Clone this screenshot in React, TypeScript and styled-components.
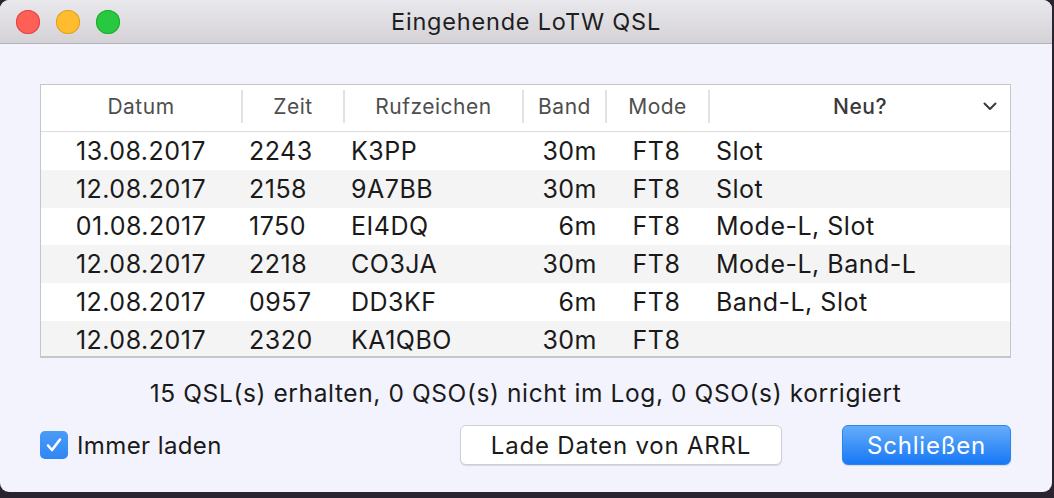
import React from "react";
import styled, { createGlobalStyle } from "styled-components";

const GlobalStyle = createGlobalStyle`
  html, body {
    margin: 0;
    padding: 0;
    background: #2a2430;
  }
  body {
    font-family: "Inter", "Noto Sans", sans-serif;
    -webkit-font-smoothing: antialiased;
  }
`;

// Window frame
const Window = styled.div`
  width: 1052px;
  height: 492px;
  background: #f3f3fd;
  border-radius: 9px;
  overflow: hidden;
  display: flex;
  flex-direction: column;
`;

const TitleBar = styled.div`
  height: 43px;
  flex: none;
  display: flex;
  align-items: center;
  position: relative;
  background: linear-gradient(#e9e8ed, #d4d2d7);
  border-bottom: 1px solid #b3b2b6;
`;

const Lights = styled.div`
  display: flex;
  gap: 16px;
  padding-left: 16px;
`;

const Light = styled.span<{ $fill: string; $edge: string }>`
  width: 24px;
  height: 24px;
  border-radius: 50%;
  background: ${(p) => p.$fill};
  box-shadow: inset 0 0 0 1px ${(p) => p.$edge};
`;

const Title = styled.div`
  position: absolute;
  left: 0;
  right: 0;
  text-align: center;
  font-size: 23.5px;
  letter-spacing: 0.8px;
  color: #1e1e1e;
`;

const Content = styled.div`
  flex: 1;
  display: flex;
  flex-direction: column;
  padding: 40px 41px 0 40px;
`;

// Table
const COLS = "200px 102px 179px 83px 103px 1fr";

const Table = styled.div`
  height: 274px;
  background: #ffffff;
  border: 1px solid #c6c6c6;
  border-bottom-width: 2px;
  box-sizing: border-box;
  overflow: hidden;
`;

const HeaderRow = styled.div`
  display: grid;
  grid-template-columns: ${COLS};
  height: 47px;
  border-bottom: 1px solid #dcdcdc;
  box-sizing: border-box;
`;

const HeaderCell = styled.div<{ $sep?: boolean; $sorted?: boolean }>`
  display: flex;
  align-items: center;
  justify-content: center;
  position: relative;
  font-size: 21px;
  letter-spacing: 0.5px;
  color: ${(p) => (p.$sorted ? "#3a3a3a" : "#4e4e4e")};
  font-weight: ${(p) => (p.$sorted ? 500 : 400)};
  border-left: ${(p) => (p.$sep ? "2px solid #e2e2e2" : "none")};
  margin: 5px 0 8px;
`;

const Chevron = styled.svg`
  position: absolute;
  right: 13px;
  top: 50%;
  margin-top: -5px;
`;

const Row = styled.div<{ $alt: boolean }>`
  display: grid;
  grid-template-columns: ${COLS};
  height: 37.8px;
  align-items: center;
  background: ${(p) => (p.$alt ? "#f4f4f4" : "#ffffff")};
  font-size: 25px;
  letter-spacing: 0.5px;
  color: #1a1a1a;
`;

const Cell = styled.div<{ $align: "left" | "center" | "right" }>`
  text-align: ${(p) => p.$align};
  padding: 0 8px;
  white-space: nowrap;
`;

const Status = styled.div`
  margin-top: 20px;
  text-align: center;
  font-size: 24.5px;
  letter-spacing: 0.6px;
  color: #1a1a1a;
`;

const Footer = styled.div`
  display: flex;
  align-items: center;
  margin-top: 17px;
`;

const CheckLabel = styled.label`
  display: flex;
  align-items: center;
  gap: 9px;
  font-size: 24px;
  letter-spacing: 0.4px;
  color: #1a1a1a;
`;

const CheckBox = styled.span`
  width: 28px;
  height: 28px;
  border-radius: 5px;
  background: linear-gradient(#4a9cf8, #2f86f3);
  display: flex;
  align-items: center;
  justify-content: center;
`;

const Button = styled.button<{ $primary?: boolean }>`
  height: 40px;
  border-radius: 6px;
  font-family: inherit;
  font-size: 24px;
  letter-spacing: 0.8px;
  padding: 0;
  color: ${(p) => (p.$primary ? "#ffffff" : "#1a1a1a")};
  background: ${(p) => (p.$primary ? "linear-gradient(#66adfa, #1778f6)" : "#ffffff")};
  border: 1px solid ${(p) => (p.$primary ? "#2a84f0" : "#cfcfd2")};
  box-shadow: 0 1px 1px rgba(0, 0, 0, 0.12);
`;

const LoadButton = styled(Button)`
  width: 322px;
  margin-left: auto;
`;

const CloseButton = styled(Button)`
  width: 169px;
  margin-left: 60px;
`;

type Qsl = { datum: string; zeit: string; call: string; band: string; mode: string; neu: string };

const rows: Qsl[] = [
  { datum: "13.08.2017", zeit: "2243", call: "K3PP", band: "30m", mode: "FT8", neu: "Slot" },
  { datum: "12.08.2017", zeit: "2158", call: "9A7BB", band: "30m", mode: "FT8", neu: "Slot" },
  { datum: "01.08.2017", zeit: "1750", call: "EI4DQ", band: "6m", mode: "FT8", neu: "Mode-L, Slot" },
  { datum: "12.08.2017", zeit: "2218", call: "CO3JA", band: "30m", mode: "FT8", neu: "Mode-L, Band-L" },
  { datum: "12.08.2017", zeit: "0957", call: "DD3KF", band: "6m", mode: "FT8", neu: "Band-L, Slot" },
  { datum: "12.08.2017", zeit: "2320", call: "KA1QBO", band: "30m", mode: "FT8", neu: "" },
];

const App = () => {
  return (
    <>
      <GlobalStyle />
      <Window>
        <TitleBar>
          <Lights>
            <Light $fill="#fe5f57" $edge="#e2463f" />
            <Light $fill="#febc2e" $edge="#dea123" />
            <Light $fill="#28c840" $edge="#1dad2b" />
          </Lights>
          <Title>Eingehende LoTW QSL</Title>
        </TitleBar>
        <Content>
          <Table>
            <HeaderRow>
              <HeaderCell>Datum</HeaderCell>
              <HeaderCell $sep>Zeit</HeaderCell>
              <HeaderCell $sep>Rufzeichen</HeaderCell>
              <HeaderCell $sep>Band</HeaderCell>
              <HeaderCell $sep>Mode</HeaderCell>
              <HeaderCell $sep $sorted>
                Neu?
                <Chevron width="14" height="9" viewBox="0 0 14 9">
                  <path d="M1.5 1.5 L7 7 L12.5 1.5" fill="none" stroke="#3a3a3a" strokeWidth="2" strokeLinecap="round" strokeLinejoin="round" />
                </Chevron>
              </HeaderCell>
            </HeaderRow>
            {rows.map((r, i) => (
              <Row key={i} $alt={i % 2 === 1}>
                <Cell $align="center">{r.datum}</Cell>
                <Cell $align="left">{r.zeit}</Cell>
                <Cell $align="left">{r.call}</Cell>
                <Cell $align="right">{r.band}</Cell>
                <Cell $align="center">{r.mode}</Cell>
                <Cell $align="left">{r.neu}</Cell>
              </Row>
            ))}
          </Table>
          <Status>15 QSL(s) erhalten, 0 QSO(s) nicht im Log, 0 QSO(s) korrigiert</Status>
          <Footer>
            <CheckLabel>
              <CheckBox>
                <svg width="18" height="16" viewBox="0 0 18 16">
                  <path d="M3 8.5 L7 13 L15 2.5" fill="none" stroke="#ffffff" strokeWidth="2.6" strokeLinecap="round" strokeLinejoin="round" />
                </svg>
              </CheckBox>
              Immer laden
            </CheckLabel>
            <LoadButton>Lade Daten von ARRL</LoadButton>
            <CloseButton $primary>Schließen</CloseButton>
          </Footer>
        </Content>
      </Window>
    </>
  );
};

export default App;
